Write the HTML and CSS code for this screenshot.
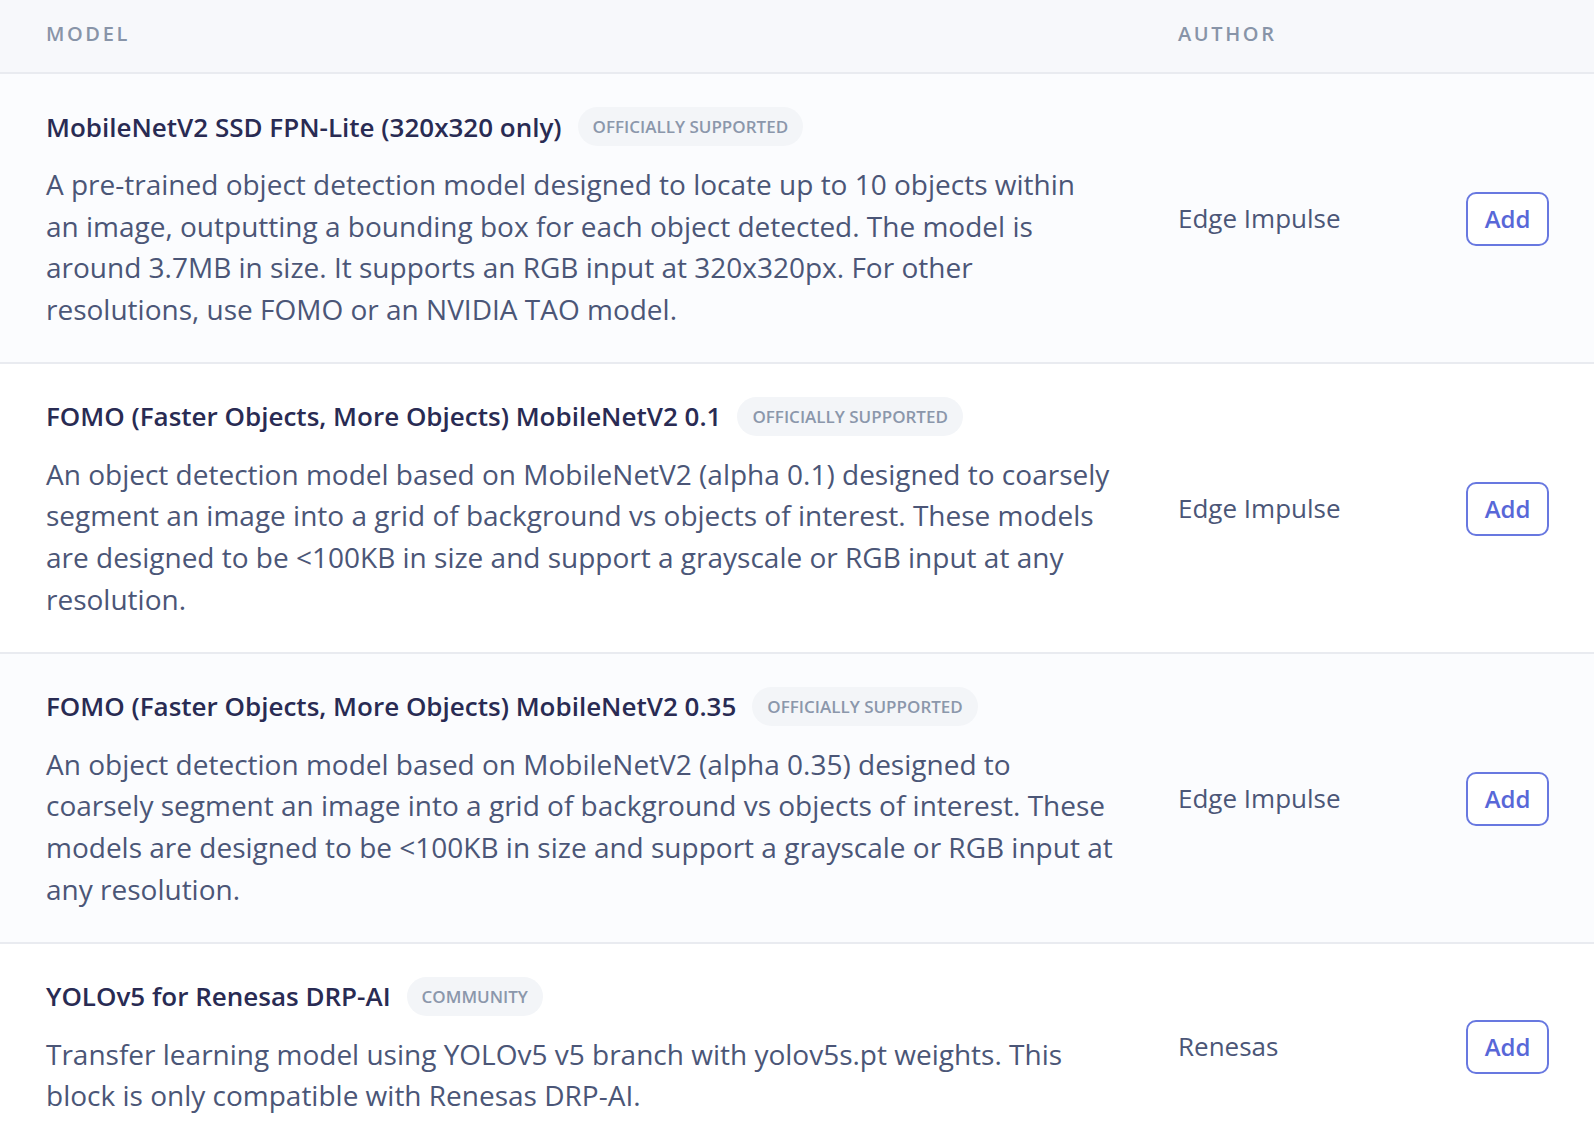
FILE: index.html
```html
<!DOCTYPE html>
<html lang="en">
<head>
<meta charset="utf-8">
<title>Models</title>
<link rel="stylesheet" href="styles.css">
</head>
<body>
<div class="table">
  <div class="row head">
    <div class="th">Model</div>
    <div class="th">Author</div>
    <div></div>
  </div>

  <div class="row item alt">
    <div class="model">
      <div class="title-line">
        <span class="title">MobileNetV2 SSD FPN-Lite (320x320 only)</span>
        <span class="badge">Officially supported</span>
      </div>
      <p class="desc">A pre-trained object detection model designed to locate up to 10 objects within<br>an image, outputting a bounding box for each object detected. The model is<br>around 3.7MB in size. It supports an RGB input at 320x320px. For other<br>resolutions, use FOMO or an NVIDIA TAO model.</p>
    </div>
    <div class="author">Edge Impulse</div>
    <div class="action"><button class="add">Add</button></div>
  </div>

  <div class="row item">
    <div class="model">
      <div class="title-line">
        <span class="title">FOMO (Faster Objects, More Objects) MobileNetV2 0.1</span>
        <span class="badge">Officially supported</span>
      </div>
      <p class="desc">An object detection model based on MobileNetV2 (alpha 0.1) designed to coarsely<br>segment an image into a grid of background vs objects of interest. These models<br>are designed to be &lt;100KB in size and support a grayscale or RGB input at any<br>resolution.</p>
    </div>
    <div class="author">Edge Impulse</div>
    <div class="action"><button class="add">Add</button></div>
  </div>

  <div class="row item alt">
    <div class="model">
      <div class="title-line">
        <span class="title">FOMO (Faster Objects, More Objects) MobileNetV2 0.35</span>
        <span class="badge">Officially supported</span>
      </div>
      <p class="desc">An object detection model based on MobileNetV2 (alpha 0.35) designed to<br>coarsely segment an image into a grid of background vs objects of interest. These<br>models are designed to be &lt;100KB in size and support a grayscale or RGB input at<br>any resolution.</p>
    </div>
    <div class="author">Edge Impulse</div>
    <div class="action"><button class="add">Add</button></div>
  </div>

  <div class="row item">
    <div class="model">
      <div class="title-line">
        <span class="title">YOLOv5 for Renesas DRP-AI</span>
        <span class="badge">Community</span>
      </div>
      <p class="desc">Transfer learning model using YOLOv5 v5 branch with yolov5s.pt weights. This<br>block is only compatible with Renesas DRP-AI.</p>
    </div>
    <div class="author">Renesas</div>
    <div class="action"><button class="add">Add</button></div>
  </div>
</div>
</body>
</html>
```

FILE: styles.css
```css
* { box-sizing: border-box; }

html, body {
  margin: 0;
  padding: 0;
  background: #ffffff;
}

body {
  font-family: "Open Sans", "Liberation Sans", sans-serif;
  color: #4b5677;
}

.table {
  width: 1594px;
}

.row {
  display: grid;
  grid-template-columns: 1132px 288px 83px;
  padding-left: 46px;
  border-bottom: 2px solid #e9ebf0;
}

.head {
  height: 74px;
  background: #f7f8fb;
  align-items: center;
}

.th {
  font-size: 20px;
  font-weight: 600;
  letter-spacing: 2.6px;
  text-transform: uppercase;
  color: #8894a8;
  padding-bottom: 6px;
}

.item {
  background: #ffffff;
  align-items: center;
  padding-top: 33.5px;
  padding-bottom: 31.5px;
}

.item.alt {
  background: #fbfcfe;
}

.model {
  min-width: 0;
}

.title-line {
  display: flex;
  align-items: center;
  gap: 16px;
  height: 38px;
  margin-bottom: 18.5px;
}

.title {
  font-size: 26px;
  font-weight: 600;
  color: #292b53;
  white-space: nowrap;
}

.badge {
  display: inline-flex;
  align-items: center;
  height: 39px;
  padding: 0 15px;
  border-radius: 20px;
  background: #f3f5f8;
  color: #8b97ab;
  font-size: 17px;
  font-weight: 600;
  text-transform: uppercase;
  white-space: nowrap;
}

.desc {
  margin: 0;
  font-size: 28px;
  line-height: 41.6px;
  color: #4b5677;
}

.author {
  font-size: 26px;
  color: #4b5677;
  padding-bottom: 2px;
}

.action {
  display: flex;
}

.add {
  width: 83px;
  height: 54px;
  border: 2px solid #6878e0;
  border-radius: 10px;
  background: #ffffff;
  color: #5867d8;
  font-family: "Open Sans", "Liberation Sans", sans-serif;
  font-size: 24px;
  font-weight: 600;
  padding: 0;
  cursor: pointer;
}
```
